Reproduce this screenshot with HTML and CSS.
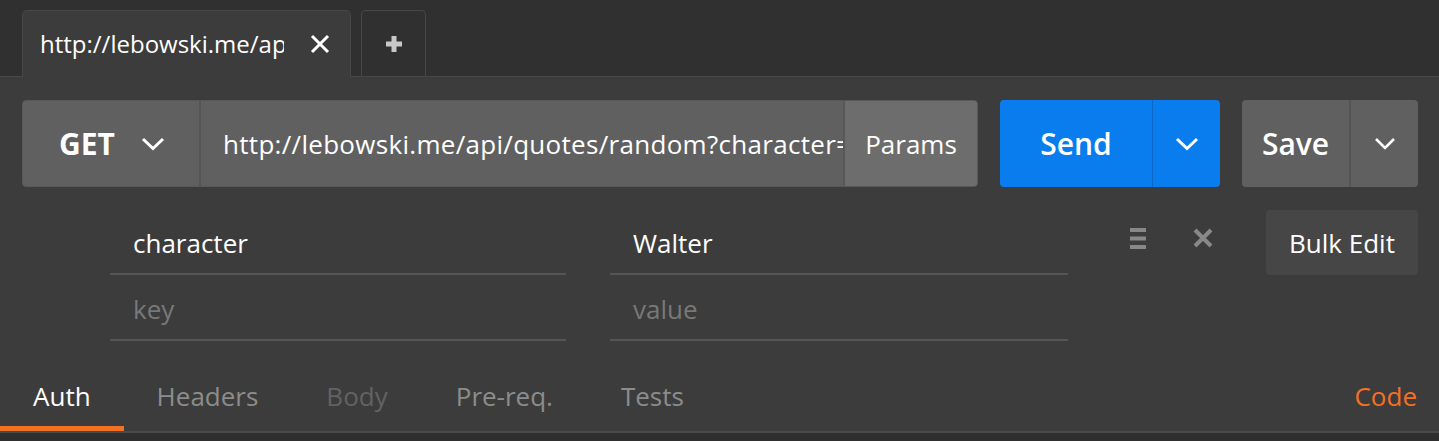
FILE: index.html
```html
<!DOCTYPE html>
<html lang="en">
<head>
<meta charset="utf-8">
<title>Request</title>
<link rel="stylesheet" href="styles.css">
</head>
<body>
<div class="tabbar">
  <div class="tab tab-active">
    <span class="tab-title">http://lebowski.me/api/quotes/random?character=Walter</span>
    <svg class="tab-close" width="20" height="20" viewBox="0 0 20 20"><path d="M2 2 L18 18 M18 2 L2 18" stroke="#fff" stroke-width="3" fill="none"/></svg>
  </div>
  <div class="tab tab-new">
    <svg width="16" height="16" viewBox="0 0 16 16"><path d="M8 0 V16 M0 8 H16" stroke="#c8c8c8" stroke-width="5" fill="none"/></svg>
  </div>
</div>

<div class="main">
  <div class="url-row">
    <div class="url-group">
      <div class="method">
        <span class="method-label">GET</span>
        <svg class="chev" width="24" height="14" viewBox="0 0 24 14"><path d="M2 2 L12 11.5 L22 2" stroke="#fff" stroke-width="3" fill="none"/></svg>
      </div>
      <div class="url-input">http://lebowski.me/api/quotes/random?character=Walter</div>
      <div class="params-btn">Params</div>
    </div>
    <div class="split split-send">
      <span class="split-label">Send</span>
      <span class="split-caret"><svg width="24" height="14" viewBox="0 0 24 14"><path d="M2 2 L12 11.5 L22 2" stroke="#fff" stroke-width="3" fill="none"/></svg></span>
    </div>
    <div class="split split-save">
      <span class="split-label">Save</span>
      <span class="split-caret"><svg width="22" height="14" viewBox="0 0 22 14"><path d="M2 2 L11 11 L20 2" stroke="#fff" stroke-width="2.6" fill="none"/></svg></span>
    </div>
  </div>

  <div class="params">
    <div class="prow">
      <div class="cell cell-key">character</div>
      <div class="cell cell-value">Walter</div>
      <div class="row-actions">
        <svg class="icon-drag" width="16" height="21" viewBox="0 0 16 21"><rect x="0" y="0" width="16" height="4" fill="#888"/><rect x="0" y="8.5" width="16" height="4" fill="#888"/><rect x="0" y="17" width="16" height="4" fill="#888"/></svg>
        <svg class="icon-del" width="20" height="20" viewBox="0 0 20 20"><path d="M2 2 L18 18 M18 2 L2 18" stroke="#888" stroke-width="4" fill="none"/></svg>
      </div>
      <div class="bulk-btn">Bulk Edit</div>
    </div>
    <div class="prow">
      <div class="cell cell-key placeholder">key</div>
      <div class="cell cell-value placeholder">value</div>
    </div>
  </div>

  <div class="req-tabs">
    <div class="req-tab req-tab-active">Auth</div>
    <div class="req-tab">Headers</div>
    <div class="req-tab req-tab-disabled">Body</div>
    <div class="req-tab">Pre-req.</div>
    <div class="req-tab">Tests</div>
    <div class="req-tab-code">Code</div>
  </div>
</div>
<div class="footer-strip"></div>
</body>
</html>
```

FILE: styles.css
```css
* { box-sizing: border-box; }

html, body {
  margin: 0;
  padding: 0;
  background: #3c3c3c;
  font-family: "Open Sans", "Noto Sans", sans-serif;
  color: #fff;
  overflow: hidden;
}

/* top tab bar */
.tabbar {
  height: 77px;
  background: #303030;
  border-bottom: 1px solid #474747;
  padding: 10px 0 0 22px;
  display: flex;
  align-items: flex-start;
}

.tab {
  height: 66px;
  border: 1px solid #474747;
  border-bottom: none;
  border-radius: 5px 5px 0 0;
  display: flex;
  align-items: center;
}

.tab-active {
  width: 329px;
  height: 67px;
  background: #3c3c3c;
  padding: 0 20px 0 17px;
  position: relative;
  z-index: 1;
}

.tab-title {
  width: 244px;
  overflow: hidden;
  white-space: nowrap;
  font-size: 24px;
  color: #fff;
  line-height: 32px;
}

.tab-close {
  margin-left: auto;
}

.tab-new {
  width: 65px;
  margin-left: 10px;
  background: #303030;
  justify-content: center;
}

/* main area */
.main {
  padding: 0 21px 0 22px;
}

.url-row {
  margin-top: 23px;
  height: 87px;
  display: flex;
  gap: 22px;
}

.url-group {
  width: 956px;
  display: flex;
  background: #606060;
  border: 1px solid #585858;
  border-radius: 4px;
  overflow: hidden;
}

.method {
  width: 178px;
  flex: none;
  display: flex;
  align-items: center;
  padding-left: 36px;
  border-right: 2px solid #545454;
}

.method-label {
  font-size: 30px;
  font-weight: 700;
  width: 82px;
}

.url-input {
  flex: 1;
  min-width: 0;
  white-space: nowrap;
  overflow: hidden;
  display: flex;
  align-items: center;
  padding-left: 22px;
  font-size: 26px;
  letter-spacing: 0.3px;
}

.params-btn {
  width: 134px;
  flex: none;
  background: #6d6d6d;
  border-left: 2px solid #585858;
  display: flex;
  align-items: center;
  justify-content: center;
  font-size: 26px;
}

.split {
  display: flex;
  border-radius: 4px;
  overflow: hidden;
}

.split-label {
  display: flex;
  align-items: center;
  justify-content: center;
  font-size: 30px;
  font-weight: 600;
}

.split-caret {
  width: 67px;
  display: flex;
  align-items: center;
  justify-content: center;
}

.split-send {
  width: 220px;
  background: #097cee;
}
.split-send .split-label { width: 153px; border-right: 1px solid #0a68c8; }

.split-save {
  width: 176px;
  background: #606060;
}
.split-save .split-label { width: 109px; border-right: 2px solid #545454; }

/* params table */
.params {
  margin-top: 22px;
}

.prow {
  height: 66px;
  display: flex;
  align-items: stretch;
  padding-left: 88px;
}

.cell {
  width: 456px;
  border-bottom: 2px solid #555;
  display: flex;
  align-items: center;
  padding: 4px 0 0 23px;
  font-size: 26px;
  color: #fff;
}

.cell-value {
  margin-left: 44px;
  width: 458px;
}

.placeholder {
  color: #787878;
}

.row-actions {
  display: flex;
  align-items: center;
  padding: 0 0 8px 62px;
  gap: 47px;
}

.bulk-btn {
  margin-left: auto;
  margin-top: 1px;
  width: 152px;
  height: 65px;
  background: #464646;
  border-radius: 4px;
  display: flex;
  align-items: center;
  justify-content: center;
  font-size: 26px;
}

/* request tabs */
.req-tabs {
  display: flex;
  align-items: flex-end;
  padding-top: 37px;
  margin: 0 -21px 0 -22px;
  border-bottom: 2px solid #4a4a4a;
}

.req-tab {
  padding: 0 35px 12px 33px;
  line-height: 36px;
  font-size: 26px;
  color: #8c8c8c;
  border-bottom: 5px solid transparent;
}

.req-tab-active {
  color: #fff;
  border-bottom-color: #f47023;
  padding-right: 33px;
}

.req-tab-disabled {
  color: #626262;
}

.req-tab-code {
  margin-left: auto;
  padding: 0 22px 17px 0;
  line-height: 36px;
  font-size: 26px;
  color: #f47023;
}

.footer-strip {
  height: 10px;
  background: #2f2f2f;
}
```
